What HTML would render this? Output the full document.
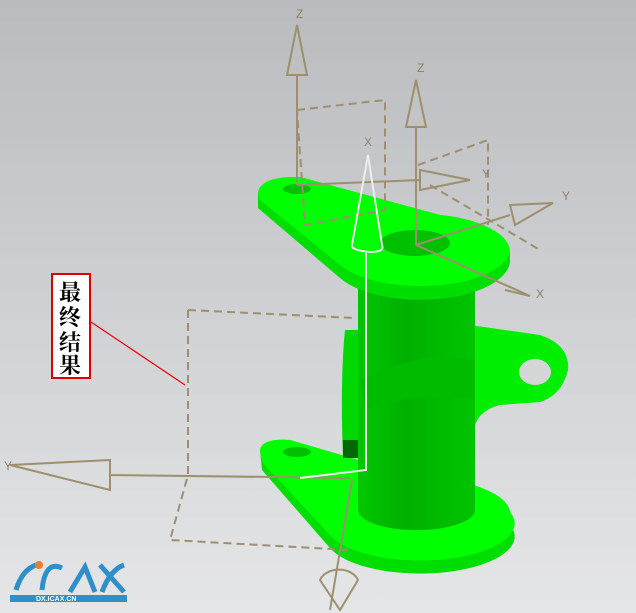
<!DOCTYPE html>
<html><head><style>
html,body{margin:0;padding:0;width:636px;height:613px;overflow:hidden}
body{background:linear-gradient(#b9bbbe,#e5e6e8);font-family:"Liberation Sans",sans-serif}
</style></head><body>
<svg width="636" height="613" viewBox="0 0 636 613" xmlns="http://www.w3.org/2000/svg" style="position:absolute;left:0;top:0">
<defs>
<linearGradient id="cyl" x1="0" x2="1"><stop offset="0" stop-color="#00c800"/><stop offset="0.4" stop-color="#00b000"/><stop offset="1" stop-color="#00c400"/></linearGradient>
</defs>
<!-- bottom flange -->
<path d="M260,450 Q262,438 290,440 L420,478 A92,36 0 0 1 510,512 L510,525 A92,36 0 0 1 330,548 L262,470 Z" fill="#00dd00"/>
<path d="M260,450 Q262,438 290,440 L420,478 A92,36 0 0 1 510,512 A92,36 0 0 1 330,535 L262,462 Z" fill="#00ff00"/>
<ellipse cx="297" cy="452" rx="14" ry="5" fill="#00c000"/>
<!-- right lug -->
<path d="M470,325 L540,335 Q570,345 568,370 Q562,395 540,402 L500,405 Q480,410 475,425 Z" fill="#00ee00"/>
<ellipse cx="535" cy="372" rx="16" ry="13" fill="#d5d6d8"/>
<!-- cylinder -->
<path d="M358,275 L475,275 L475,510 A58,20 0 0 1 358,510 Z" fill="url(#cyl)"/>
<path d="M360,380 Q420,350 475,360 L475,400 Q420,390 365,410 Z" fill="#00bc00"/>
<path d="M345,330 L358,330 L358,458 L343,458 Q340,380 345,330 Z" fill="#00d800"/>
<rect x="343" y="440" width="15" height="18" fill="#006a00"/>
<!-- top flange -->
<path d="M258,192 Q262,176 300,177 L440,215 A90,38 0 0 1 510,252 L510,262 A90,40 0 0 1 340,278 L258,208 Z" fill="#00dd00"/>
<path d="M258,192 Q262,176 300,177 L440,215 A90,38 0 0 1 510,252 A90,38 0 0 1 340,265 L260,200 Z" fill="#00ff00"/>
<ellipse cx="297" cy="189" rx="14" ry="5" fill="#00c000"/>
<ellipse cx="415" cy="243" rx="35" ry="13" fill="#00c000"/>
<!-- tan lines -->
<g stroke="#9e8f6e" stroke-width="2" fill="none">
<path d="M297,185 L297,75 M287,75 L297,25 L307,75 Z"/>
<path d="M416,245 L416,127 M406,127 L416,80 L426,127 Z"/>
<path d="M110,475 L350,478 M110,460 L10,465 L110,490 Z"/>
<path d="M297,185 L420,180 M420,170 L470,180 L420,190 Z"/>
<path d="M416,245 L510,215 M510,205 L553,203 L515,225 Z"/>
<path d="M416,245 L530,296 L505,290"/>
<path d="M352,480 L330,610 M320,580 A20,15 0 0 1 358,580 L340,610 Z"/>
<path d="M297,110 L385,100 L385,210 L305,225 Z M418,165 L488,140 L488,225" stroke-dasharray="8,5"/>
<path d="M188,310 L188,475 L170,540 L350,550 M188,310 L355,318 M430,185 L540,250" stroke-dasharray="8,5"/>
</g>
<g stroke="#eeeeee" stroke-width="2" fill="none">
<path d="M352,245 Q350,250 370,252 Q385,252 382,245 L368,155 Z M366,252 L366,470 L300,478"/>
</g>
<g fill="#8e8066" font-size="12">
<text x="296" y="18">Z</text><text x="417" y="72">Z</text><text x="364" y="146">X</text>
<text x="482" y="178">Y</text><text x="562" y="200">Y</text><text x="536" y="298">X</text><text x="4" y="470">Y</text>
</g>
<line x1="88" y1="320" x2="185" y2="385" stroke="#e00" stroke-width="1.2"/>
<rect x="52" y="274" width="38" height="104" fill="#fff" stroke="#d00" stroke-width="2"/>
<text font-family="'Liberation Serif','Noto Serif CJK SC',serif" font-size="22" font-weight="bold" fill="#000"><tspan x="59" y="300">最</tspan><tspan x="59" y="325">终</tspan><tspan x="59" y="350">结</tspan><tspan x="59" y="373">果</tspan></text>
<!-- logo -->
<g stroke="#2e8fc9" stroke-width="5" fill="none">
<path d="M16,590 Q22,570 36,565"/><path d="M62,568 Q45,560 42,590"/>
<path d="M70,592 L85,567 L95,592"/><path d="M100,565 L124,592 M124,565 Q110,570 102,592"/>
</g>
<circle cx="39" cy="565" r="4" fill="#e8802a"/>
<rect x="10" y="595" width="117" height="7" fill="#2e8fc9"/>
<text x="36" y="601" font-size="7" font-weight="bold" fill="#fff">DX.ICAX.CN</text>
</svg>
</body></html>
